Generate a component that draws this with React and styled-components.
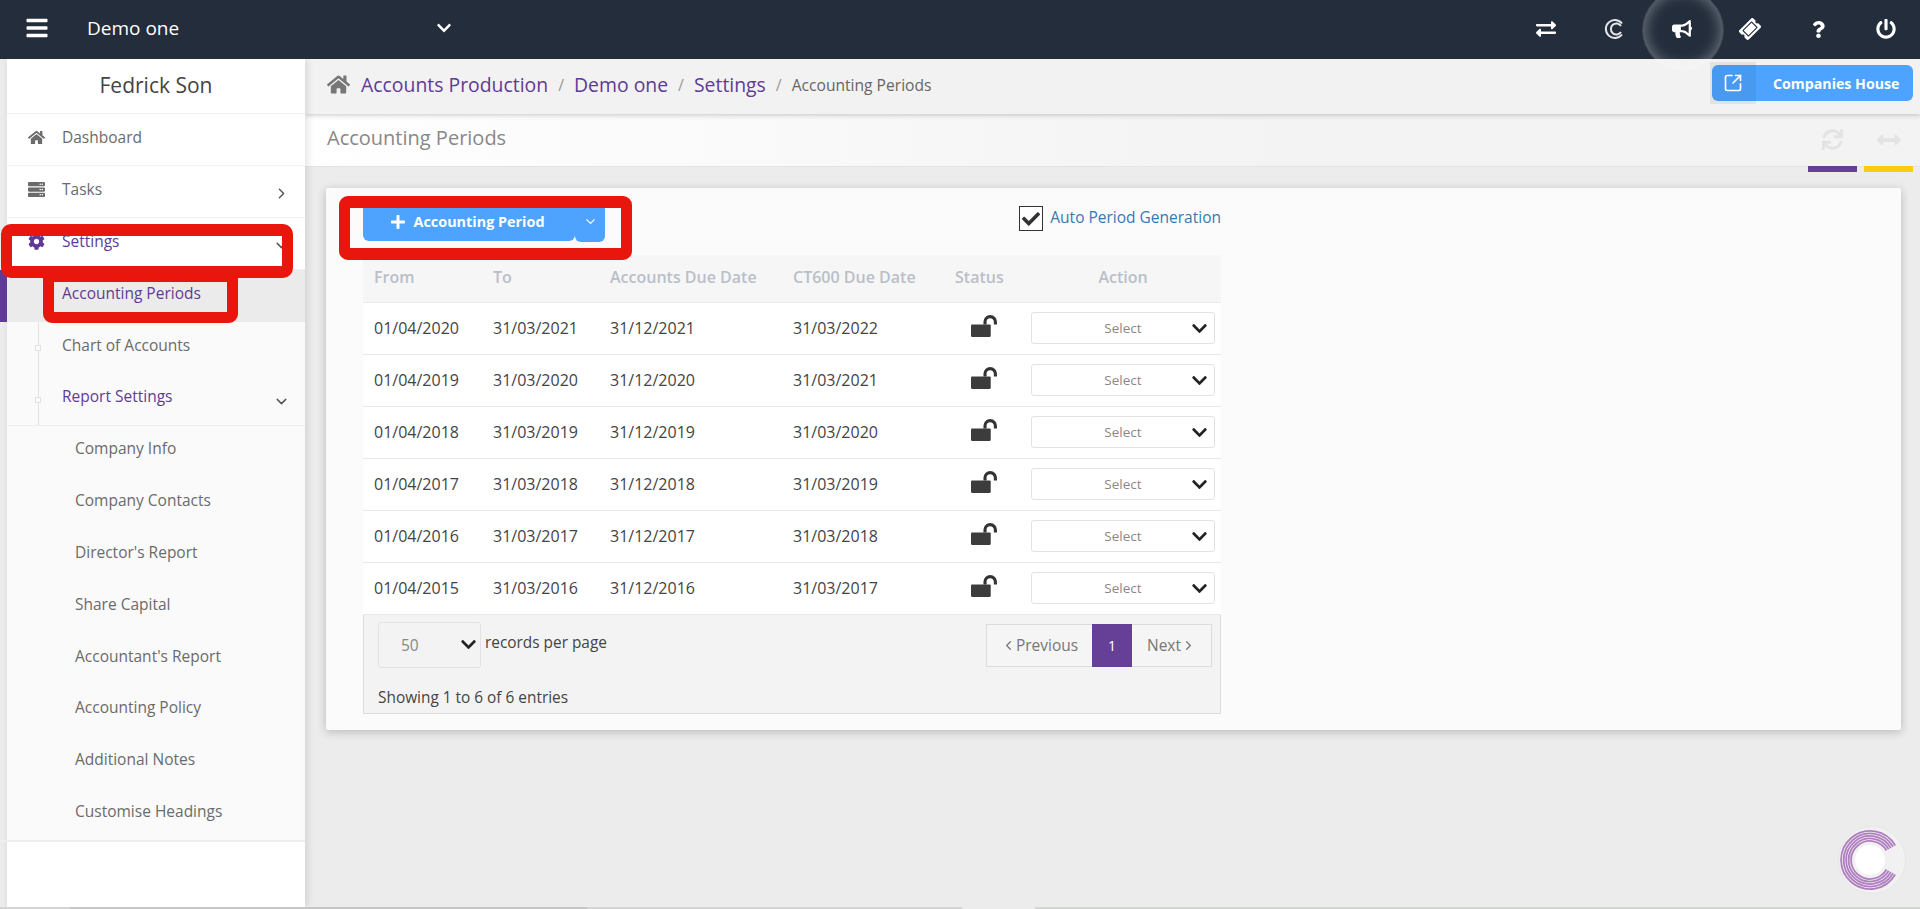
import React from "react";
import styled, { createGlobalStyle } from "styled-components";
import {
  FaBars,
  FaChevronDown,
  FaCheck,
  FaCog,
  FaExchangeAlt,
  FaBullhorn,
  FaHome,
  FaPlus,
  FaPowerOff,
  FaQuestion,
  FaServer,
  FaSync,
  FaTicketAlt,
  FaArrowsAltH,
} from "react-icons/fa";
import { LuChevronDown, LuChevronRight, LuChevronLeft, LuSquareArrowOutUpRight } from "react-icons/lu";

const font = `"Open Sans", "Noto Sans", sans-serif`;
const purple = "#5f3a96";

const GlobalStyle = createGlobalStyle`
  html, body {
    margin: 0;
    height: 100%;
    overflow: hidden;
    background: #ececec;
    font-family: ${font};
  }
  * { box-sizing: border-box; }
`;

const rows = [
  ["01/04/2020", "31/03/2021", "31/12/2021", "31/03/2022"],
  ["01/04/2019", "31/03/2020", "31/12/2020", "31/03/2021"],
  ["01/04/2018", "31/03/2019", "31/12/2019", "31/03/2020"],
  ["01/04/2017", "31/03/2018", "31/12/2018", "31/03/2019"],
  ["01/04/2016", "31/03/2017", "31/12/2017", "31/03/2018"],
  ["01/04/2015", "31/03/2016", "31/12/2016", "31/03/2017"],
];

const reportItems = [
  "Company Info",
  "Company Contacts",
  "Director's Report",
  "Share Capital",
  "Accountant's Report",
  "Accounting Policy",
  "Additional Notes",
  "Customise Headings",
];

const logoRings = [29, 26.5, 24, 21.5, 19];

// open ring, the gap looks to the right
const ringPath = (r) => {
  const dx = (r * 0.87).toFixed(1);
  const dy = (r * 0.5).toFixed(1);
  return `M${32 + +dx} ${34 - dy}A${r} ${r} 0 1 0 ${32 + +dx} ${34 + +dy}`;
};

const CoinIcon = () => (
  <svg width="20" height="22" viewBox="0 0 20 22" fill="none" stroke="#e4e6e9">
    <path d="M18 5.5A9 9 0 1 0 18 16.5" strokeWidth="2" />
    <path d="M17 8A5.5 5.5 0 1 0 17 14" strokeWidth="2" />
  </svg>
);

const LockIcon = () => (
  <svg width="27" height="22" viewBox="0 0 26 21">
    <rect x="0" y="9" width="19" height="12" rx="1" fill="#3c3c3c" />
    <path d="M13.5 9V6.5A5 5 0 0 1 23.5 6.5V9" fill="none" stroke="#333" strokeWidth="3" />
  </svg>
);

const LogoMark = () => (
  <svg width="68" height="68" viewBox="0 0 68 68" fill="none" stroke="#b07fc0" strokeWidth="1.8">
    <circle cx="34" cy="34" r="33.5" fill="#f1f1f1" stroke="#e6e6e6" strokeWidth="1" />
    {logoRings.map((r) => (
      <path key={r} d={ringPath(r)} />
    ))}
    <circle cx="32" cy="34" r="15" fill="#fff" stroke="none" />
  </svg>
);

const App = () => (
  <Page>
    <GlobalStyle />
    <TopBar>
      <TopLeft>
        <MenuButton>
          <FaBars />
        </MenuButton>
        <CompanyName>Demo one</CompanyName>
        <CompanyChevron>
          <FaChevronDown />
        </CompanyChevron>
      </TopLeft>
      <TopIcons>
        <TopIcon><FaExchangeAlt /></TopIcon>
        <TopIcon><CoinIcon /></TopIcon>
        <TopIcon $glow><FaBullhorn /></TopIcon>
        <TopIcon><TicketGlyph /></TopIcon>
        <TopIcon $small><FaQuestion /></TopIcon>
        <TopIcon><FaPowerOff /></TopIcon>
      </TopIcons>
    </TopBar>

    <Body>
      <Sidebar>
        <UserName>Fedrick Son</UserName>
        <NavRow>
          <NavIcon><FaHome /></NavIcon>
          Dashboard
        </NavRow>
        <NavRow>
          <NavIcon><FaServer /></NavIcon>
          Tasks
          <RowArrow><LuChevronRight /></RowArrow>
        </NavRow>
        <NavRow $purple>
          <NavIcon><FaCog /></NavIcon>
          Settings
          <RowArrow><LuChevronDown /></RowArrow>
        </NavRow>
        <SubMenu>
          <TreeLine />
          <SubRow $active>Accounting Periods</SubRow>
          <SubRow>
            <TreeNode />
            Chart of Accounts
          </SubRow>
          <SubRow $purple $divided>
            <TreeNode />
            Report Settings
            <RowArrow><LuChevronDown /></RowArrow>
          </SubRow>
          {reportItems.map((item) => (
            <ReportRow key={item}>{item}</ReportRow>
          ))}
        </SubMenu>
      </Sidebar>

      <Main>
        <Breadcrumb>
          <CrumbHome><FaHome /></CrumbHome>
          <CrumbLink>Accounts Production</CrumbLink>
          <CrumbSep>/</CrumbSep>
          <CrumbLink>Demo one</CrumbLink>
          <CrumbSep>/</CrumbSep>
          <CrumbLink>Settings</CrumbLink>
          <CrumbSep>/</CrumbSep>
          <CrumbCurrent>Accounting Periods</CrumbCurrent>
          <HouseButton>
            <HouseIcon><LuSquareArrowOutUpRight /></HouseIcon>
            <HouseLabel>Companies House</HouseLabel>
          </HouseButton>
        </Breadcrumb>

        <TitleBar>
          <PageTitle>Accounting Periods</PageTitle>
          <Tool $accent="#663f97"><FaSync /></Tool>
          <Tool $accent="#fdcb0f" $wide><FaArrowsAltH /></Tool>
        </TitleBar>

        <Card>
          <CardInner>
            <Toolbar>
              <AddButton>
                <FaPlus />
                Accounting Period
              </AddButton>
              <SplitButton>
                <LuChevronDown />
              </SplitButton>
              <AutoGen>
                <CheckBox><FaCheck /></CheckBox>
                Auto Period Generation
              </AutoGen>
            </Toolbar>

            <Table>
              <colgroup>
                <col width="119" />
                <col width="117" />
                <col width="183" />
                <col width="162" />
                <col width="76" />
                <col width="201" />
              </colgroup>
              <thead>
                <tr>
                  <Th>From</Th>
                  <Th>To</Th>
                  <Th>Accounts Due Date</Th>
                  <Th>CT600 Due Date</Th>
                  <Th>Status</Th>
                  <Th $center>Action</Th>
                </tr>
              </thead>
              <tbody>
                {rows.map((row) => (
                  <tr key={row[0]}>
                    {row.map((date) => (
                      <Td key={date}>{date}</Td>
                    ))}
                    <LockCell><LockIcon /></LockCell>
                    <ActionCell>
                      <SelectBox>
                        Select
                        <SelectArrow><FaChevronDown /></SelectArrow>
                      </SelectBox>
                    </ActionCell>
                  </tr>
                ))}
              </tbody>
            </Table>

            <TableFooter>
              <PagerRow>
                <PageSize>
                  50
                  <PageSizeArrow><FaChevronDown /></PageSizeArrow>
                </PageSize>
                <PageSizeLabel>records per page</PageSizeLabel>
                <Pager>
                  <PagerButton $wide>
                    <LuChevronLeft />
                    Previous
                  </PagerButton>
                  <PagerCurrent>1</PagerCurrent>
                  <PagerButton>
                    Next
                    <LuChevronRight />
                  </PagerButton>
                </Pager>
              </PagerRow>
              <Showing>Showing 1 to 6 of 6 entries</Showing>
            </TableFooter>
          </CardInner>
        </Card>
      </Main>
    </Body>

    <BottomStrip />

    <SettingsMark />
    <PeriodsMark />
    <ButtonMark />
    <Logo><LogoMark /></Logo>
  </Page>
);

const Page = styled.div`
  position: relative;
  width: 1920px;
  height: 909px;
  overflow: hidden;
  background: #ececec;
`;

const TopBar = styled.header`
  position: relative;
  z-index: 3;
  display: flex;
  align-items: center;
  height: 59px;
  background: #232d3b;
  color: #fff;
`;

const TopLeft = styled.div`
  display: flex;
  align-items: center;
  padding-bottom: 4px;
`;

const MenuButton = styled.div`
  display: flex;
  margin-left: 25px;
  font-size: 24px;
  color: #fff;
`;

const CompanyName = styled.div`
  margin-left: 38px;
  width: 349px;
  font-size: 19px;
`;

const CompanyChevron = styled.div`
  display: flex;
  font-size: 16px;
`;

const TopIcons = styled.div`
  display: flex;
  margin-left: auto;
`;

const TopIcon = styled.div`
  position: relative;
  display: flex;
  align-items: center;
  justify-content: center;
  width: 68px;
  height: 59px;
  padding-bottom: 1px;
  font-size: ${(p) => (p.$small ? "17px" : "20px")};
  color: #fff;

  ${(p) =>
    p.$glow &&
    `
    &::before {
      content: "";
      position: absolute;
      left: -6px;
      top: -11px;
      width: 80px;
      height: 80px;
      border-radius: 50%;
      box-shadow: inset 0 0 16px rgba(255, 255, 255, 0.42);
      border: 1px solid rgba(255, 255, 255, 0.12);
    }
  `}
`;

const TicketGlyph = styled(FaTicketAlt)`
  transform: rotate(-45deg);
`;

const Body = styled.div`
  display: flex;
  height: 848px;
`;

const BottomStrip = styled.div`
  position: relative;
  z-index: 3;
  height: 2px;
  background: linear-gradient(
    to right,
    #d5d5d5 70px,
    #c6c6c6 70px 587px,
    #d5d5d5 587px 962px,
    #ececec 962px 1035px,
    #d4d6d0 1035px
  );
`;

const Sidebar = styled.aside`
  position: relative;
  z-index: 2;
  flex: none;
  width: 298px;
  margin-left: 7px;
  background: #fff;
  box-shadow: 2px 0 8px rgba(0, 0, 0, 0.12);
`;

const UserName = styled.div`
  height: 55px;
  padding-top: 12px;
  text-align: center;
  font-size: 21px;
  color: #444;
  border-bottom: 1px solid #f0f0f0;
`;

const NavRow = styled.div`
  position: relative;
  display: flex;
  align-items: center;
  height: 52px;
  padding-bottom: 5px;
  font-size: 15.5px;
  color: ${(p) => (p.$purple ? purple : "#6b6b6b")};
  border-bottom: 1px solid #f2f2f2;
`;

const NavIcon = styled.span`
  display: flex;
  justify-content: center;
  width: 58px;
  margin-right: -3px;
  font-size: 17px;
  color: inherit;
`;

const RowArrow = styled.span`
  position: absolute;
  right: 15px;
  top: 19px;
  display: flex;
  font-size: 17px;
  color: #555;
`;

const SubMenu = styled.div`
  position: relative;
  margin-left: -7px;
  padding-left: 7px;
  background: linear-gradient(to right, transparent 7px, #fafafa 7px);
  border-bottom: 2px solid #eee;
`;

const TreeLine = styled.span`
  position: absolute;
  left: 38px;
  top: 0;
  width: 1px;
  height: 155px;
  background: #e2e2e2;
`;

const TreeNode = styled.span`
  position: absolute;
  left: 28px;
  top: 23px;
  width: 6px;
  height: 6px;
  background: #fafafa;
  border: 1px solid #e2e2e2;
`;

const SubRow = styled.div`
  position: relative;
  display: flex;
  align-items: center;
  height: 52px;
  padding: 0 0 7px 55px;
  font-size: 15.5px;
  color: ${(p) => (p.$active || p.$purple ? purple : "#6b6b6b")};
  background: ${(p) => (p.$active ? "#ebebeb" : "transparent")};
  border-bottom: ${(p) => (p.$divided ? "1px solid #eee" : "none")};

  ${(p) =>
    p.$active &&
    `
    box-shadow: -7px 0 0 ${purple};
  `}
`;

const ReportRow = styled.div`
  display: flex;
  align-items: center;
  height: 51.8px;
  padding: 0 0 7px 68px;
  font-size: 15.5px;
  color: #6b6b6b;
`;

const Main = styled.main`
  flex: 1;
  min-width: 0;
`;

const Breadcrumb = styled.nav`
  position: relative;
  z-index: 1;
  display: flex;
  align-items: center;
  height: 55px;
  padding: 0 7px 0 22px;
  background: #f2f2f2;
  box-shadow: 0 1px 5px rgba(0, 0, 0, 0.22);
`;

const CrumbHome = styled.span`
  display: flex;
  margin: 0 11px 4px 0;
  font-size: 23px;
  color: #777;
`;

const CrumbLink = styled.span`
  margin-bottom: 5px;
  font-size: 19.4px;
  color: ${purple};
`;

const CrumbSep = styled.span`
  margin: 0 10px 4px;
  font-size: 16px;
  color: #999;
`;

const CrumbCurrent = styled.span`
  margin-bottom: 4px;
  font-size: 15.6px;
  color: #666;
`;

const HouseButton = styled.div`
  position: relative;
  display: flex;
  align-items: center;
  width: 201px;
  height: 36px;
  margin-left: auto;
  margin-bottom: 7px;
  background: #4da3ff;
  border-radius: 6px;
  color: #fff;
`;

const HouseIcon = styled.span`
  position: absolute;
  left: -2px;
  top: -3px;
  display: flex;
  align-items: center;
  justify-content: center;
  width: 46px;
  height: 42px;
  font-size: 20px;
  background: rgba(0, 0, 0, 0.06);
`;

const HouseLabel = styled.span`
  margin-left: 61px;
  font-size: 14.2px;
  font-weight: 700;
  white-space: nowrap;
`;

const TitleBar = styled.div`
  display: flex;
  gap: 7px;
  height: 53px;
  padding-right: 7px;
  background: linear-gradient(to right, #fff, #f3f3f3 60%);
  border-bottom: 1px solid #e4e4e4;
`;

const PageTitle = styled.h1`
  flex: 1;
  margin: 0;
  padding: 10px 0 0 22px;
  font-size: 20px;
  font-weight: 400;
  color: #888;
`;

const Tool = styled.div`
  display: flex;
  align-items: center;
  justify-content: center;
  width: 49px;
  height: 58px;
  padding-bottom: 1px;
  font-size: ${(p) => (p.$wide ? "24px" : "21px")};
  color: #e3e3e3;
  border-bottom: 6px solid ${(p) => p.$accent};
`;

const Card = styled.section`
  margin: 21px 19px 0 21px;
  padding: 19px 37px 16px;
  background: #fbfbfb;
  border-radius: 2px;
  box-shadow: 0 2px 10px rgba(0, 0, 0, 0.22);
`;

const CardInner = styled.div`
  width: 858px;
`;

const Toolbar = styled.div`
  display: flex;
  height: 48px;
`;

const AddButton = styled.div`
  display: flex;
  align-items: center;
  justify-content: center;
  gap: 8px;
  width: 212px;
  height: 34px;
  padding: 0 4px 5px 0;
  font-size: 14.4px;
  font-weight: 700;
  color: #fff;
  background: #4da3ff;
  border-radius: 0 0 6px 6px;

  svg {
    font-size: 16px;
  }
`;

const SplitButton = styled.div`
  display: flex;
  align-items: center;
  justify-content: center;
  width: 30px;
  height: 35px;
  padding-bottom: 6px;
  font-size: 15px;
  color: #fff;
  background: #4da3ff;
  border-radius: 0 0 6px 6px;
`;

const AutoGen = styled.div`
  display: flex;
  gap: 7px;
  height: 25px;
  margin-left: auto;
  margin-top: -1px;
  font-size: 15.5px;
  line-height: 22px;
  color: #337ab7;
`;

const CheckBox = styled.span`
  display: flex;
  align-items: center;
  justify-content: center;
  width: 24px;
  height: 25px;
  font-size: 18px;
  color: #333;
  background: #fff;
  border: 1px solid #333;
`;

const Table = styled.table`
  width: 858px;
  table-layout: fixed;
  border-collapse: collapse;
  background: #fff;
`;

const Th = styled.th`
  height: 47px;
  padding: 0 0 2px 11px;
  font-size: 16px;
  font-weight: 600;
  text-align: ${(p) => (p.$center ? "center" : "left")};
  color: #b9bfc8;
  background: #f6f6f6;
  border-bottom: 1px solid #e8e8ee;

  ${(p) => p.$center && "padding-right: 6px;"}
`;

const Td = styled.td`
  height: 52px;
  padding: 0 0 1px 11px;
  font-size: 16px;
  color: #444;
  border-bottom: 1px solid #e8e8ee;
`;

const LockCell = styled(Td)`
  padding: 0 0 5px 27px;

  svg {
    display: block;
  }
`;

const ActionCell = styled(Td)`
  padding: 0 6px 0 11px;
`;

const SelectBox = styled.div`
  position: relative;
  height: 32px;
  font-size: 13.5px;
  line-height: 30px;
  text-align: center;
  color: #888;
  background: #fff;
  border: 1px solid #e3e3e3;
  border-radius: 3px;
`;

const SelectArrow = styled.span`
  position: absolute;
  right: 6px;
  top: 7px;
  display: flex;
  font-size: 17px;
  color: #222;
`;

const TableFooter = styled.div`
  height: 99px;
  padding: 7px 8px 0 14px;
  background: #f3f3f3;
  border: 1px solid #dcdcdc;
  border-top: none;
`;

const PagerRow = styled.div`
  display: flex;
  align-items: flex-start;
  height: 46px;
`;

const PageSize = styled.div`
  position: relative;
  width: 103px;
  height: 46px;
  padding-left: 22px;
  font-size: 15.5px;
  line-height: 44px;
  color: #888;
  border: 1px solid #e2e2e2;
  border-radius: 3px;
`;

const PageSizeArrow = styled.span`
  position: absolute;
  right: 3px;
  top: 13px;
  display: flex;
  font-size: 17px;
  color: #222;
`;

const PageSizeLabel = styled.span`
  margin-left: 4px;
  padding-top: 10px;
  font-size: 15.4px;
  color: #444;
`;

const Pager = styled.div`
  display: flex;
  height: 43px;
  margin: 2px 0 0 auto;
  background: #f5f5f5;
  border: 1px solid #dcdcdc;
`;

const PagerButton = styled.div`
  display: flex;
  align-items: center;
  justify-content: center;
  width: ${(p) => (p.$wide ? "105px" : "79px")};
  font-size: 15.5px;
  color: #777;

  svg {
    font-size: 15px;
  }
`;

const PagerCurrent = styled.div`
  display: flex;
  align-items: center;
  justify-content: center;
  width: 40px;
  margin: -1px 0;
  font-size: 14px;
  color: #fff;
  background: #663f97;
`;

const Showing = styled.div`
  margin-top: 19px;
  font-size: 15.4px;
  color: #444;
`;

const SettingsMark = styled.div`
  position: absolute;
  z-index: 5;
  left: 1px;
  top: 224px;
  width: 292px;
  height: 54px;
  border: solid #e8160c;
  border-width: 12px 11px;
  border-radius: 10px;
`;

const PeriodsMark = styled.div`
  position: absolute;
  z-index: 5;
  left: 43px;
  top: 278px;
  width: 195px;
  height: 45px;
  border: solid #e8160c;
  border-width: 4px 11px 11px;
  border-radius: 0 0 9px 9px;
`;

const ButtonMark = styled.div`
  position: absolute;
  z-index: 5;
  left: 339px;
  top: 196px;
  width: 293px;
  height: 64px;
  border: solid #e8160c;
  border-width: 12px 11px;
  border-radius: 9px;
`;

const Logo = styled.div`
  position: absolute;
  z-index: 6;
  left: 1838px;
  top: 826px;
  display: flex;
  filter: blur(0.7px);
`;

export default App;
